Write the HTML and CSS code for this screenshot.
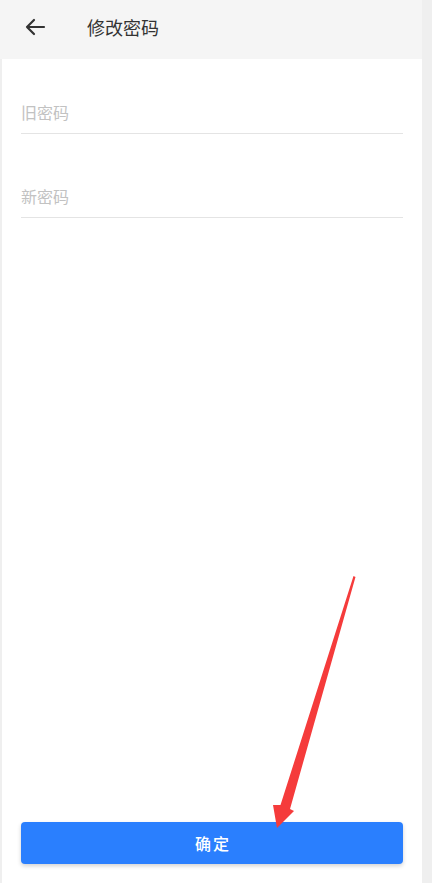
FILE: index.html
```html
<!DOCTYPE html>
<html lang="zh-CN">
<head>
  <meta charset="UTF-8" />
  <meta name="viewport" content="width=device-width, initial-scale=1.0"/>
  <title>修改密码</title>
  <link rel="stylesheet" href="styles.css">
</head>
<body>
  <div class="page">
    <header class="top-bar">
      <button class="back-btn" aria-label="返回">
        <svg width="22" height="18" viewBox="0 0 22 18">
          <path d="M20 9H3M10 2L3 9l7 7" fill="none" stroke="#333" stroke-width="2.2" stroke-linecap="round" stroke-linejoin="round"/>
        </svg>
      </button>
      <h1>修改密码</h1>
    </header>

    <div class="form">
      <div class="field"><input type="password" placeholder="旧密码"></div>
      <div class="field"><input type="password" placeholder="新密码"></div>
    </div>

    <button class="submit-btn">确定</button>

    <!-- annotation arrow drawn over the page -->
    <svg class="mark" width="432" height="883" viewBox="0 0 432 883">
      <polygon points="353.5,576 355.5,577 290,809 294,811 277,828 273,805 280.5,805" fill="#f53b3b"/>
    </svg>
  </div>
</body>
</html>
```

FILE: styles.css
```css
body {
  margin: 0;
  background: #efefef;
  font-family: "Noto Sans CJK SC", "Noto Sans", sans-serif;
}

.page {
  position: relative;
  width: 420px;
  height: 883px;
  margin-left: 2px;
  background: #fff;
  display: flex;
  flex-direction: column;
}

.top-bar {
  height: 59px;
  margin-left: -2px;
  padding-left: 24px;
  background: #f5f5f5;
  display: flex;
  align-items: center;
}

.top-bar h1 {
  margin: 0 0 5px 41px;
  font-size: 18px;
  font-weight: 400;
  color: #333;
}

.back-btn {
  border: none;
  background: none;
  padding: 0;
  margin-bottom: 5px;
  display: flex;
}

.form {
  padding: 32px 19px 0;
  display: flex;
  flex-direction: column;
  gap: 41px;
}

.field {
  height: 42px;
  border-bottom: 1px solid #e4e4e4;
  display: flex;
  align-items: center;
}

.field input {
  width: 100%;
  border: none;
  outline: none;
  padding: 0;
  font-family: inherit;
  font-size: 16px;
  color: #333;
  background: transparent;
}

.field input::placeholder {
  color: #c2c2c2;
}

.submit-btn {
  margin: auto 19px 19px;
  height: 42px;
  border: none;
  border-radius: 4px;
  background: #2a7ffe;
  color: #fff;
  font-family: inherit;
  font-size: 16px;
  font-weight: 500;
  letter-spacing: 2px;
  text-indent: 2px;
  box-shadow: 0 2px 4px rgba(0, 0, 0, 0.18);
}

.mark {
  position: absolute;
  top: 0;
  left: -2px;
  pointer-events: none;
}
```
